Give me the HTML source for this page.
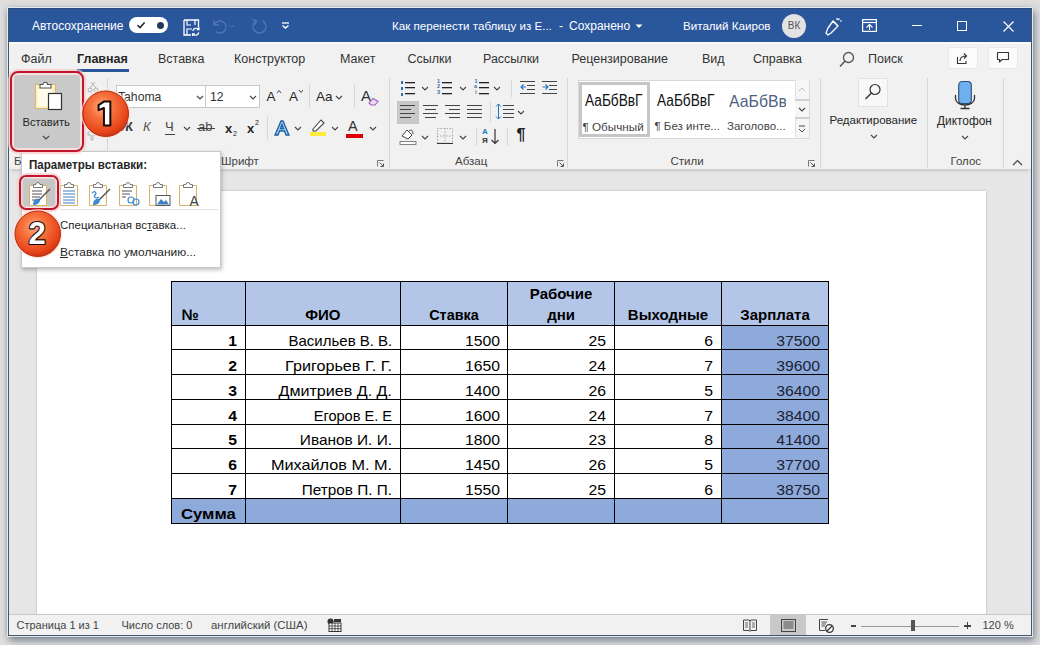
<!DOCTYPE html>
<html><head><meta charset="utf-8">
<style>
*{margin:0;padding:0;box-sizing:border-box}
html,body{width:1040px;height:645px;overflow:hidden;background:#dfdedd;font-family:"Liberation Sans",sans-serif}
.a{position:absolute}
#win{position:absolute;left:8px;top:8px;width:1024px;height:628px;background:#f1f1f1;box-shadow:0 0 0 1px rgba(228,236,245,.95), 2px 4px 7px 1px rgba(40,62,88,.5), -1px 0 5px rgba(60,85,110,.3);overflow:hidden}
#frame{position:absolute;left:8px;top:8px;width:1024px;height:628px;border:1px solid #4a5563;border-top:1px solid #2e4a78}
#title{position:absolute;left:0;top:0;width:1024px;height:34px;background:#2a569c;color:#fff;font-size:12px}
#tabs{position:absolute;left:0;top:34px;width:1024px;height:33px;background:#f1f1f1;font-size:12.5px;color:#333;border-top:2px solid #fafafa}
#ribbon{position:absolute;left:0;top:67px;width:1024px;height:94px;overflow:hidden;background:#f1f1f1;color:#262626;font-size:11.5px}
#doc{position:absolute;left:0;top:161px;width:1024px;height:445px;background:#e6e6e6;border-top:2px solid #d0d0d0;box-shadow:inset 0 2px 2px -1px #d8d8d8}
#page{position:absolute;left:29px;top:20px;width:949px;height:430px;background:#fff;box-shadow:0 0 2px rgba(0,0,0,.25)}
#status{position:absolute;left:0;top:606px;width:1024px;height:22px;overflow:hidden;background:#f1f1f1;border-top:1px solid #c9c9c9;font-size:11px;color:#444}
.t{position:absolute;white-space:nowrap}
#ov{position:absolute;left:0;top:0;width:1040px;height:645px}
#tbl{position:absolute;left:0;top:0;width:1040px;height:645px;font-family:"Liberation Sans",sans-serif}
</style></head><body>
<div id="win">
  <div id="title">
    <div class="t" style="left:24px;top:11px">Автосохранение</div>
    <div class="a" style="left:121px;top:9px;width:39px;height:16px;border-radius:8px;background:#fff"></div>
    <svg class="a" style="left:128px;top:12px" width="10" height="10" viewBox="0 0 10 10"><path d="M1.5 5.2 L4 7.6 L8.6 2.4" stroke="#222" stroke-width="1.5" fill="none"/></svg>
    <div class="a" style="left:148.5px;top:13.5px;width:7px;height:7px;border-radius:50%;background:#26385a"></div>
    <svg class="a" style="left:175px;top:10.5px" width="17" height="17" viewBox="0 0 17 17"><path d="M1 1 H15.5 V8.5 M1 1 V16 H8" stroke="#fff" stroke-width="1.3" fill="none"/><path d="M4 1 V6 H8 M12 1 V6" stroke="#fff" stroke-width="1.2" fill="none"/><path d="M4 16 V10 H9" stroke="#fff" stroke-width="1.2" fill="none"/><path d="M9.8 12 a3.6 3.4 0 0 1 6 -1.8 M16 8.5 v2.2 h-2.2 M15.8 13.5 a3.6 3.4 0 0 1 -6 1.8 M9.6 17 v-2.2 h2.2" stroke="#fff" stroke-width="1.2" fill="none"/></svg>
    <svg class="a" style="left:203px;top:9px" width="32" height="18" viewBox="0 0 32 18"><path d="M3 3 V8 H8 M3.5 7.5 A6 6 0 1 1 5 14.5" stroke="#5174b0" stroke-width="1.4" fill="none"/><path d="M18 8 l2.5 2.5 l2.5 -2.5" stroke="#5174b0" stroke-width="1" fill="none"/></svg>
    <svg class="a" style="left:241px;top:9px" width="20" height="20" viewBox="0 0 20 20"><path d="M7 4 A6.5 6.5 0 1 0 14 4" stroke="#5174b0" stroke-width="1.5" fill="none"/><path d="M3.5 2.5 L7.5 4 L6 8" stroke="#5174b0" stroke-width="1.4" fill="none"/></svg>
    <svg class="a" style="left:273px;top:13.5px" width="9" height="7" viewBox="0 0 9 7"><path d="M1 1 H8" stroke="#fff" stroke-width="1.3"/><path d="M1.5 3.5 L4.5 6 L7.5 3.5" stroke="#fff" stroke-width="1.4" fill="none"/></svg>
    <div class="t" style="left:384px;top:11px;font-size:11.6px">Как перенести таблицу из E...</div>
    <div class="t" style="left:551px;top:11px">-</div>
    <div class="t" style="left:561px;top:11px">Сохранено</div>
    <svg class="a" style="left:627px;top:16px" width="8" height="5" viewBox="0 0 8 5"><path d="M0.5 0.5 L4 4 L7.5 0.5 Z" fill="#fff"/></svg>
    <div class="t" style="left:675px;top:11px;font-size:11.6px">Виталий Каиров</div>
    <div class="a" style="left:774px;top:5.5px;width:24px;height:24px;border-radius:50%;background:#e3e3e3;color:#555;font-size:10px;line-height:24px;text-align:center">ВК</div>
    <svg class="a" style="left:815px;top:8px" width="20" height="20" viewBox="0 0 20 20"><path d="M3 17 L5 19 L8 17 L15 10 L10 5 L5 12 Z" stroke="#fff" stroke-width="1.3" fill="none" stroke-linejoin="round"/><path d="M10 5 L15 10" stroke="#fff" stroke-width="1.3"/><path d="M14 2 v2 M17 5 h2 M16.5 2.5 l-1.5 1.5" stroke="#fff" stroke-width="1.2"/></svg>
    <svg class="a" style="left:854px;top:11px" width="15" height="13" viewBox="0 0 15 13"><rect x="0.6" y="0.6" width="13.8" height="11.8" fill="none" stroke="#fff" stroke-width="1.2"/><path d="M0.6 3.5 H14.4" stroke="#fff" stroke-width="1.2"/><path d="M4.5 8.5 L7.5 5.5 L10.5 8.5 M7.5 6 V11" stroke="#fff" stroke-width="1.1" fill="none"/></svg>
    <div class="a" style="left:904px;top:17px;width:10px;height:1.2px;background:#fff"></div>
    <div class="a" style="left:949px;top:12.5px;width:10px;height:10px;border:1.2px solid #fff"></div>
    <svg class="a" style="left:995px;top:12.5px" width="11" height="11" viewBox="0 0 11 11"><path d="M0.5 0.5 L10.5 10.5 M10.5 0.5 L0.5 10.5" stroke="#fff" stroke-width="1.2"/></svg>
  </div>
  <div id="tabs">
    <div class="t" style="left:13px;top:7.5px">Файл</div>
    <div class="t" style="left:69px;top:7.5px;font-weight:bold;color:#262626">Главная</div>
    <div class="a" style="left:69px;top:25px;width:52px;height:3px;background:#2a569c"></div>
    <div class="t" style="left:150px;top:7.5px">Вставка</div>
    <div class="t" style="left:226px;top:7.5px">Конструктор</div>
    <div class="t" style="left:332px;top:7.5px">Макет</div>
    <div class="t" style="left:399.5px;top:7.5px">Ссылки</div>
    <div class="t" style="left:475px;top:7.5px">Рассылки</div>
    <div class="t" style="left:563.5px;top:7.5px">Рецензирование</div>
    <div class="t" style="left:694px;top:7.5px">Вид</div>
    <div class="t" style="left:745px;top:7.5px">Справка</div>
    <svg class="a" style="left:831px;top:6.5px" width="16" height="17" viewBox="0 0 16 17"><circle cx="9.5" cy="6.5" r="5" stroke="#555" stroke-width="1.3" fill="none"/><path d="M6 10 L1 15.5" stroke="#555" stroke-width="1.5"/></svg>
    <div class="t" style="left:860px;top:7.5px">Поиск</div>
    <div class="a" style="left:940px;top:3px;width:30px;height:22px;background:#fbfbfb;border:1px solid #e8e8e8;border-radius:2px"></div>
    <svg class="a" style="left:948px;top:7px" width="14" height="14" viewBox="0 0 14 14"><path d="M1.5 6 V12.5 H10 V10" stroke="#333" stroke-width="1.1" fill="none"/><path d="M4 10 C4 6.5 6.5 5 10 5 M8 2.5 L10.5 5 L8 7.5" stroke="#333" stroke-width="1.1" fill="none"/></svg>
    <div class="a" style="left:980px;top:3px;width:30px;height:22px;background:#fbfbfb;border:1px solid #e8e8e8;border-radius:2px"></div>
    <svg class="a" style="left:988px;top:7px" width="14" height="13" viewBox="0 0 14 13"><path d="M1.5 1.5 H12.5 V8.5 H6 L3.5 11 V8.5 H1.5 Z" stroke="#333" stroke-width="1.1" fill="none" stroke-linejoin="round"/></svg>
  </div>
  <div id="ribbon">
<div class="a" style="left:6px;top:0px;width:66px;height:73px;background:#c9c9c9"></div>
<svg class="a" style="left:24px;top:5px" width="32" height="32" viewBox="0 0 32 32">
<rect x="3.4" y="4.5" width="20" height="24" fill="#fcf1c6" stroke="#d8b868" stroke-width="1"/><rect x="6" y="9" width="14" height="17" fill="#fffbea"/>
<path d="M8 8 V4.5 H11 a2.3 2.3 0 0 1 4.6 0 H19 V8 Z" fill="#fff" stroke="#555" stroke-width="1.1"/>
<rect x="16.5" y="13.5" width="13" height="16" fill="#fff" stroke="#333" stroke-width="1.2"/></svg>
<div class="t" style="left:14.5px;top:41.7px;font-size:11.2px;line-height:11.2px;">Вставить</div>
<svg class="a" style="left:34px;top:59.5px" width="8" height="5" viewBox="0 0 8 5"><path d="M1 1 L4 4 L7 1" stroke="#444" stroke-width="1.1" fill="none"/></svg>
<svg class="a" style="left:77px;top:5px;opacity:.4" width="16" height="62" viewBox="0 0 16 62"><circle cx="5" cy="10" r="2" stroke="#555" fill="none"/><circle cx="11" cy="10" r="2" stroke="#555" fill="none"/><path d="M5 8 L10 2 M11 8 L6 2" stroke="#555"/><rect x="3.5" y="26.5" width="8" height="10" fill="none" stroke="#555"/><path d="M3 52 h8 v3 h-3 v5 h-2 v-5 h-3 Z" fill="none" stroke="#555"/></svg>
<div class="a" style="left:98.5px;top:3px;width:1px;height:72px;background:#d6d6d6"></div>
<div class="t" style="left:6px;top:80.6px;font-size:11.5px;line-height:11.5px;color:#444">Буфер обмена</div>
<div class="a" style="left:107.5px;top:10px;width:90px;height:22.5px;background:#fff;border:1px solid #c8c8c8"></div>
<div class="a" style="left:196.5px;top:10px;width:55.5px;height:22.5px;background:#fff;border:1px solid #c8c8c8"></div>
<div class="t" style="left:110px;top:15.7px;font-size:12.2px;line-height:12.2px;color:#333">Tahoma</div>
<svg class="a" style="left:188px;top:19.5px" width="8" height="5" viewBox="0 0 8 5"><path d="M1 1 L4 4 L7 1" stroke="#444" stroke-width="1.1" fill="none"/></svg>
<div class="t" style="left:202px;top:15.7px;font-size:12.2px;line-height:12.2px;color:#333">12</div>
<svg class="a" style="left:241px;top:19.5px" width="8" height="5" viewBox="0 0 8 5"><path d="M1 1 L4 4 L7 1" stroke="#444" stroke-width="1.1" fill="none"/></svg>
<div class="t" style="left:258.5px;top:15.4px;font-size:13.5px;line-height:13.5px;">A</div><svg class="a" style="left:268px;top:14px" width="6" height="5" viewBox="0 0 6 5"><path d="M1 4 L3 1.5 L5 4" stroke="#444" fill="none"/></svg>
<div class="t" style="left:281px;top:15.4px;font-size:13.5px;line-height:13.5px;">A</div><svg class="a" style="left:290px;top:14px" width="6" height="5" viewBox="0 0 6 5"><path d="M1 1 L3 3.5 L5 1" stroke="#444" fill="none"/></svg>
<div class="a" style="left:301px;top:9px;width:1px;height:24px;background:#d6d6d6"></div>
<div class="t" style="left:308px;top:15.4px;font-size:13.5px;line-height:13.5px;">Aa</div><svg class="a" style="left:327px;top:19.5px" width="8" height="5" viewBox="0 0 8 5"><path d="M1 1 L4 4 L7 1" stroke="#444" stroke-width="1.1" fill="none"/></svg>
<div class="a" style="left:346px;top:9px;width:1px;height:24px;background:#d6d6d6"></div>
<div class="t" style="left:353px;top:13.2px;font-size:15px;line-height:15px;color:#333">A</div><svg class="a" style="left:360px;top:22px" width="11" height="9" viewBox="0 0 11 9"><path d="M1 6 L5 1.5 L10 4.5 L7 8 H3 Z" fill="#eddcf5" stroke="#9b5fc4" stroke-width="1.1"/></svg>
<div class="t" style="left:113px;top:45.2px;font-size:13px;line-height:13px;color:#333"><b>Ж</b></div>
<div class="t" style="left:135px;top:45.2px;font-size:13px;line-height:13px;color:#555"><i>К</i></div>
<div class="t" style="left:157px;top:45.2px;font-size:13px;line-height:13px;color:#444">Ч</div><div class="a" style="left:157px;top:59px;width:10px;height:1px;background:#444"></div>
<svg class="a" style="left:175px;top:50.5px" width="8" height="5" viewBox="0 0 8 5"><path d="M1 1 L4 4 L7 1" stroke="#444" stroke-width="1.1" fill="none"/></svg>
<div class="t" style="left:190px;top:45.2px;font-size:13px;line-height:13px;color:#444">ab</div><div class="a" style="left:189px;top:53px;width:18px;height:1px;background:#444"></div>
<div class="t" style="left:217px;top:47.0px;font-size:13px;line-height:13px;"><b>x</b></div><div class="t" style="left:225px;top:55.2px;font-size:7px;line-height:7px;">2</div>
<div class="t" style="left:239px;top:47.0px;font-size:13px;line-height:13px;"><b>x</b></div><div class="t" style="left:247px;top:44.2px;font-size:7px;line-height:7px;">2</div>
<div class="a" style="left:258.5px;top:41px;width:1px;height:24px;background:#d6d6d6"></div>
<svg class="a" style="left:265px;top:44px" width="18" height="18" viewBox="0 0 18 18"><path d="M2 16 L8 2 H10 L16 16 H13 L11.5 12 H6.5 L5 16 Z M7.5 9.5 H10.5 L9 5.5 Z" fill="#9fd0f5" stroke="#1d5e9e" stroke-width="1.3" fill-rule="evenodd"/></svg><svg class="a" style="left:285.5px;top:50.5px" width="8" height="5" viewBox="0 0 8 5"><path d="M1 1 L4 4 L7 1" stroke="#444" stroke-width="1.1" fill="none"/></svg>
<svg class="a" style="left:300px;top:42px" width="20" height="20" viewBox="0 0 20 20"><path d="M5 12 L13 3 L16 6 L8 14 H5 Z" fill="#fff" stroke="#444" stroke-width="1.1"/><rect x="2" y="15" width="16" height="4" fill="#ffeb3b"/></svg><svg class="a" style="left:323px;top:50.5px" width="8" height="5" viewBox="0 0 8 5"><path d="M1 1 L4 4 L7 1" stroke="#444" stroke-width="1.1" fill="none"/></svg>
<div class="t" style="left:340px;top:44.3px;font-size:14.5px;line-height:14.5px;color:#333">A</div><div class="a" style="left:338px;top:59px;width:17px;height:4px;background:#d00"></div><svg class="a" style="left:360.5px;top:50.5px" width="8" height="5" viewBox="0 0 8 5"><path d="M1 1 L4 4 L7 1" stroke="#444" stroke-width="1.1" fill="none"/></svg>
<div class="t" style="left:213px;top:81.1px;font-size:11.5px;line-height:11.5px;color:#444">Шрифт</div>
<svg class="a" style="left:369.0px;top:84.5px" width="7" height="7" viewBox="0 0 7 7"><path d="M0.5 6.5 V0.5 H6.5" stroke="#777" stroke-width="1" fill="none"/><path d="M2.5 2.5 L6 6 M3.5 6.5 H6.5 V3.5" stroke="#555" stroke-width="1" fill="none"/></svg>
<div class="a" style="left:380.5px;top:3px;width:1px;height:90px;background:#d6d6d6"></div>
<div class="a" style="left:397px;top:7px;width:10px;height:1px;background:#222;box-shadow:0 1px 0 rgba(60,60,60,.35)"></div><div class="a" style="left:392.5px;top:6px;width:2.6px;height:2.6px;background:#2f6fae"></div><div class="a" style="left:397px;top:12px;width:10px;height:1px;background:#222;box-shadow:0 1px 0 rgba(60,60,60,.35)"></div><div class="a" style="left:392.5px;top:12px;width:2.6px;height:2.6px;background:#2f6fae"></div><div class="a" style="left:397px;top:18px;width:10px;height:1px;background:#222;box-shadow:0 1px 0 rgba(60,60,60,.35)"></div><div class="a" style="left:392.5px;top:18px;width:2.6px;height:2.6px;background:#2f6fae"></div><svg class="a" style="left:413px;top:11.0px" width="8" height="5" viewBox="0 0 8 5"><path d="M1 1 L4 4 L7 1" stroke="#444" stroke-width="1.1" fill="none"/></svg>
<div class="a" style="left:434px;top:7px;width:10px;height:1px;background:#222;box-shadow:0 1px 0 rgba(60,60,60,.35)"></div><div class="t" style="left:429px;top:3.5px;font-size:5.5px;line-height:5.5px;color:#2f6fae;font-weight:bold">1</div><div class="a" style="left:434px;top:12px;width:10px;height:1px;background:#222;box-shadow:0 1px 0 rgba(60,60,60,.35)"></div><div class="t" style="left:429px;top:9.2px;font-size:5.5px;line-height:5.5px;color:#2f6fae;font-weight:bold">2</div><div class="a" style="left:434px;top:18px;width:10px;height:1px;background:#222;box-shadow:0 1px 0 rgba(60,60,60,.35)"></div><div class="t" style="left:429px;top:14.9px;font-size:5.5px;line-height:5.5px;color:#2f6fae;font-weight:bold">3</div><svg class="a" style="left:451px;top:11.0px" width="8" height="5" viewBox="0 0 8 5"><path d="M1 1 L4 4 L7 1" stroke="#444" stroke-width="1.1" fill="none"/></svg>
<div class="a" style="left:471px;top:7px;width:10px;height:1px;background:#222;box-shadow:0 1px 0 rgba(60,60,60,.35)"></div><div class="t" style="left:466.5px;top:3.5px;font-size:5.5px;line-height:5.5px;color:#2f6fae;font-weight:bold">1</div><div class="a" style="left:471px;top:12px;width:10px;height:1px;background:#222;box-shadow:0 1px 0 rgba(60,60,60,.35)"></div><div class="t" style="left:466px;top:9.2px;font-size:5.5px;line-height:5.5px;color:#2f6fae;font-weight:bold">a</div><div class="a" style="left:471px;top:18px;width:10px;height:1px;background:#222;box-shadow:0 1px 0 rgba(60,60,60,.35)"></div><div class="t" style="left:467px;top:14.9px;font-size:5.5px;line-height:5.5px;color:#2f6fae;font-weight:bold">i</div><svg class="a" style="left:485px;top:11.0px" width="8" height="5" viewBox="0 0 8 5"><path d="M1 1 L4 4 L7 1" stroke="#444" stroke-width="1.1" fill="none"/></svg>
<div class="a" style="left:503px;top:5px;width:1px;height:17px;background:#d6d6d6"></div>
<div class="a" style="left:511.5px;top:6px;width:15px;height:1.3px;background:#444"></div><div class="a" style="left:518.5px;top:10px;width:8px;height:1.3px;background:#444"></div><div class="a" style="left:518.5px;top:14px;width:8px;height:1.3px;background:#444"></div><div class="a" style="left:511.5px;top:18px;width:15px;height:1.3px;background:#444"></div><svg class="a" style="left:511.5px;top:8px" width="7" height="8" viewBox="0 0 7 8"><path d="M6 4 H1 M3.5 1.5 L1 4 L3.5 6.5" stroke="#1e76c8" stroke-width="1.1" fill="none"/></svg>
<div class="a" style="left:533.5px;top:6px;width:15px;height:1.3px;background:#444"></div><div class="a" style="left:540.5px;top:10px;width:8px;height:1.3px;background:#444"></div><div class="a" style="left:540.5px;top:14px;width:8px;height:1.3px;background:#444"></div><div class="a" style="left:533.5px;top:18px;width:15px;height:1.3px;background:#444"></div><svg class="a" style="left:533.5px;top:8px" width="7" height="8" viewBox="0 0 7 8"><path d="M0.5 4 H6 M3.5 1.5 L6 4 L3.5 6.5" stroke="#1e76c8" stroke-width="1.1" fill="none"/></svg>
<div class="a" style="left:389px;top:26px;width:22px;height:23px;background:#c8c8c8"></div>
<div class="a" style="left:392px;top:30px;width:15px;height:1.3px;background:#444"></div><div class="a" style="left:392px;top:34px;width:11px;height:1.3px;background:#444"></div><div class="a" style="left:392px;top:38px;width:15px;height:1.3px;background:#444"></div><div class="a" style="left:392px;top:42px;width:11px;height:1.3px;background:#444"></div>
<div class="a" style="left:414.5px;top:30px;width:15px;height:1.3px;background:#444"></div><div class="a" style="left:416.5px;top:34px;width:11px;height:1.3px;background:#444"></div><div class="a" style="left:414.5px;top:38px;width:15px;height:1.3px;background:#444"></div><div class="a" style="left:416.5px;top:42px;width:11px;height:1.3px;background:#444"></div>
<div class="a" style="left:436.5px;top:30px;width:15px;height:1.3px;background:#444"></div><div class="a" style="left:440.5px;top:34px;width:11px;height:1.3px;background:#444"></div><div class="a" style="left:436.5px;top:38px;width:15px;height:1.3px;background:#444"></div><div class="a" style="left:440.5px;top:42px;width:11px;height:1.3px;background:#444"></div>
<div class="a" style="left:458.5px;top:30px;width:15px;height:1.3px;background:#444"></div><div class="a" style="left:458.5px;top:34px;width:15px;height:1.3px;background:#444"></div><div class="a" style="left:458.5px;top:38px;width:15px;height:1.3px;background:#444"></div><div class="a" style="left:458.5px;top:42px;width:15px;height:1.3px;background:#444"></div>
<div class="a" style="left:481.5px;top:27px;width:1px;height:20px;background:#d6d6d6"></div>
<div class="a" style="left:495px;top:30px;width:11px;height:1.3px;background:#444"></div><div class="a" style="left:495px;top:34px;width:11px;height:1.3px;background:#444"></div><div class="a" style="left:495px;top:38px;width:11px;height:1.3px;background:#444"></div><div class="a" style="left:495px;top:42px;width:11px;height:1.3px;background:#444"></div><svg class="a" style="left:487px;top:28px" width="7" height="17" viewBox="0 0 7 17"><path d="M3.5 1 V16 M1 3.5 L3.5 1 L6 3.5 M1 13.5 L3.5 16 L6 13.5" stroke="#1e76c8" stroke-width="1" fill="none"/></svg><svg class="a" style="left:508.5px;top:34.5px" width="8" height="5" viewBox="0 0 8 5"><path d="M1 1 L4 4 L7 1" stroke="#444" stroke-width="1.1" fill="none"/></svg>
<svg class="a" style="left:391px;top:52px" width="18" height="18" viewBox="0 0 18 18"><path d="M3 9 L8 3 L13 8 L9 12 Z" fill="#fff" stroke="#444"/><path d="M10 4 C12 2 14 3 14 7" stroke="#444" fill="none"/><rect x="1" y="14.5" width="16" height="3" fill="#fff" stroke="#666" stroke-width=".8"/></svg><svg class="a" style="left:413px;top:59.5px" width="8" height="5" viewBox="0 0 8 5"><path d="M1 1 L4 4 L7 1" stroke="#444" stroke-width="1.1" fill="none"/></svg>
<svg class="a" style="left:429px;top:53px" width="16" height="16" viewBox="0 0 16 16"><rect x="0.5" y="0.5" width="15" height="15" fill="none" stroke="#aaa" stroke-dasharray="1.5 1.5"/><path d="M8 0 V16 M0 8 H16" stroke="#aaa" stroke-dasharray="1.5 1.5"/><path d="M0 15.5 H16" stroke="#333" stroke-width="1.2"/></svg><svg class="a" style="left:451px;top:59.5px" width="8" height="5" viewBox="0 0 8 5"><path d="M1 1 L4 4 L7 1" stroke="#444" stroke-width="1.1" fill="none"/></svg>
<div class="a" style="left:467.5px;top:53px;width:1px;height:18px;background:#d6d6d6"></div>
<div class="t" style="left:474px;top:53.1px;font-size:8px;line-height:8px;color:#1e76c8;font-weight:bold">A</div><div class="t" style="left:474px;top:62.1px;font-size:8px;line-height:8px;color:#333;font-weight:bold">Я</div><svg class="a" style="left:482px;top:53px" width="10" height="17" viewBox="0 0 10 17"><path d="M5 1 V15.5 M1.5 12 L5 15.5 L8.5 12" stroke="#333" stroke-width="1.2" fill="none"/></svg>
<div class="a" style="left:498.5px;top:53px;width:1px;height:18px;background:#d6d6d6"></div>
<div class="t" style="left:508.5px;top:52.2px;font-size:16px;line-height:16px;color:#222;font-weight:bold">¶</div>
<div class="t" style="left:447px;top:81.1px;font-size:11.5px;line-height:11.5px;color:#444">Абзац</div>
<svg class="a" style="left:548.5px;top:84.5px" width="7" height="7" viewBox="0 0 7 7"><path d="M0.5 6.5 V0.5 H6.5" stroke="#777" stroke-width="1" fill="none"/><path d="M2.5 2.5 L6 6 M3.5 6.5 H6.5 V3.5" stroke="#555" stroke-width="1" fill="none"/></svg>
<div class="a" style="left:559px;top:3px;width:1px;height:90px;background:#d6d6d6"></div>
<div class="a" style="left:569.5px;top:4.5px;width:232px;height:59px;background:#fff;border:1px solid #d9d9d9"></div>
<div class="a" style="left:570.5px;top:6.5px;width:71px;height:55px;border:3px solid #c6c6c6"></div>
<div class="t" style="left:577px;top:18.4px;font-size:16px;line-height:16px;color:#111;transform:scaleX(.855);transform-origin:0 0">АаБбВвГ</div>
<div class="t" style="left:574.5px;top:45.6px;font-size:11.7px;line-height:11.7px;color:#444">¶ Обычный</div>
<div class="t" style="left:649.3px;top:18.4px;font-size:16px;line-height:16px;color:#111;transform:scaleX(.855);transform-origin:0 0">АаБбВвГ</div>
<div class="t" style="left:646.5px;top:45.6px;font-size:11.5px;line-height:11.5px;color:#444">¶ Без инте...</div>
<div class="a" style="left:720.5px;top:10px;width:57.5px;height:30px;overflow:hidden"><div class="t" style="left:0;top:7.8px;font-size:17px;line-height:17px;color:#4c6283;transform:scaleX(.93);transform-origin:0 0">АаБбВв</div></div>
<div class="t" style="left:719px;top:45.6px;font-size:11.5px;line-height:11.5px;color:#444">Заголово...</div>
<div class="a" style="left:787px;top:5px;width:14px;height:58px;background:#f6f6f6;border-left:1px solid #e0e0e0"></div>
<div class="a" style="left:787px;top:24px;width:14px;height:20px;border-top:2px solid #cfcfcf;border-bottom:2px solid #cfcfcf;background:#f6f6f6"></div>
<svg class="a" style="left:790px;top:12px" width="8" height="5" viewBox="0 0 8 5"><path d="M1 4 L4 1 L7 4" stroke="#bbb" fill="none"/></svg>
<svg class="a" style="left:790px;top:31.5px" width="8" height="5" viewBox="0 0 8 5"><path d="M1 1 L4 4 L7 1" stroke="#444" stroke-width="1.1" fill="none"/></svg>
<svg class="a" style="left:790px;top:50px" width="8" height="8" viewBox="0 0 8 8"><path d="M1 1 H7 M1 4 L4 7 L7 4" stroke="#444" fill="none"/></svg>
<div class="t" style="left:662.5px;top:81.1px;font-size:11.5px;line-height:11.5px;color:#444">Стили</div>
<svg class="a" style="left:800.0px;top:84.5px" width="7" height="7" viewBox="0 0 7 7"><path d="M0.5 6.5 V0.5 H6.5" stroke="#777" stroke-width="1" fill="none"/><path d="M2.5 2.5 L6 6 M3.5 6.5 H6.5 V3.5" stroke="#555" stroke-width="1" fill="none"/></svg>
<div class="a" style="left:812px;top:3px;width:1px;height:90px;background:#d6d6d6"></div>
<div class="a" style="left:850px;top:2.5px;width:30px;height:29px;background:#f8f8f8;border:1px solid #e2e2e2"></div>
<svg class="a" style="left:856px;top:8px" width="18" height="18" viewBox="0 0 18 18"><circle cx="11" cy="6.5" r="5" stroke="#333" stroke-width="1.2" fill="none"/><path d="M7.5 10 L1.5 16" stroke="#333" stroke-width="1.5"/></svg>
<div class="t" style="left:821.5px;top:39.6px;font-size:11.5px;line-height:11.5px;">Редактирование</div>
<svg class="a" style="left:862px;top:58.5px" width="8" height="5" viewBox="0 0 8 5"><path d="M1 1 L4 4 L7 1" stroke="#444" stroke-width="1.1" fill="none"/></svg>
<div class="a" style="left:919px;top:3px;width:1px;height:90px;background:#d6d6d6"></div>
<svg class="a" style="left:943px;top:4px" width="28" height="32" viewBox="0 0 28 32"><rect x="7.7" y="2.5" width="12.6" height="22" rx="3.5" fill="#6eb0ee" stroke="#2d4f74" stroke-width="1.1"/><path d="M4.5 16 V19.5 a9.5 6.5 0 0 0 19 0 V16" stroke="#333" stroke-width="1.3" fill="none"/><path d="M14 26 V29.5 M9.5 29.5 H18.5" stroke="#333" stroke-width="1.3"/></svg>
<div class="t" style="left:929px;top:41.1px;font-size:11.9px;line-height:11.9px;">Диктофон</div>
<svg class="a" style="left:952.5px;top:59.5px" width="8" height="5" viewBox="0 0 8 5"><path d="M1 1 L4 4 L7 1" stroke="#444" stroke-width="1.1" fill="none"/></svg>
<div class="t" style="left:942.5px;top:81.1px;font-size:11.5px;line-height:11.5px;color:#444">Голос</div>
<div class="a" style="left:995px;top:3px;width:1px;height:90px;background:#d6d6d6"></div>
<svg class="a" style="left:1004px;top:84px" width="11" height="7" viewBox="0 0 11 7"><path d="M1 6 L5.5 1.5 L10 6" stroke="#444" stroke-width="1.2" fill="none"/></svg>
</div>
  <div id="doc"><div id="page"></div></div>
  <div id="status"><div class="t" style="left:8.5px;top:5px;font-size:11px;line-height:11px">Страница 1 из 1</div>
<div class="t" style="left:113.5px;top:5px;font-size:11px;line-height:11px">Число слов: 0</div>
<div class="t" style="left:203px;top:5px;font-size:11px;line-height:11px;transform:scaleX(1.037);transform-origin:0 0">английский (США)</div>
<svg class="a" style="left:319px;top:3px" width="15" height="14" viewBox="0 0 15 14"><circle cx="3.5" cy="3.5" r="3" fill="#333"/><rect x="2" y="5" width="12" height="8.5" fill="#fff" stroke="#333"/><path d="M2 8 H14 M2 10.7 H14 M5 5 V13.5 M8 5 V13.5 M11 5 V13.5" stroke="#333" stroke-width=".8"/><rect x="7" y="1" width="7" height="3" fill="#333"/></svg>
<svg class="a" style="left:735px;top:4px" width="14" height="13" viewBox="0 0 14 13"><path d="M0.5 1 H6 L7 2 L8 1 H13.5 V11.5 H8 L7 12.5 L6 11.5 H0.5 Z M7 2 V12" stroke="#444" fill="none"/><path d="M2 4 H5 M2 6 H5 M2 8 H5 M9 4 H12 M9 6 H12 M9 8 H12" stroke="#444" stroke-width=".8"/></svg>
<div class="a" style="left:762px;top:0px;width:36px;height:21px;background:#c8c8c8"></div>
<svg class="a" style="left:773px;top:4px" width="15" height="13" viewBox="0 0 15 13"><rect x="0.5" y="0.5" width="14" height="12" fill="none" stroke="#444"/><path d="M2.5 3 H12.5 M2.5 5 H12.5 M2.5 7 H12.5 M2.5 9 H12.5" stroke="#444" stroke-width=".9"/></svg>
<svg class="a" style="left:811px;top:4px" width="15" height="14" viewBox="0 0 15 14"><path d="M9 0.5 H0.5 V11.5 H6" stroke="#444" fill="none"/><path d="M2.5 3 H8 M2.5 5 H7 M2.5 7 H6" stroke="#444" stroke-width=".9"/><circle cx="10.5" cy="9.5" r="3.8" fill="#fff" stroke="#333" stroke-width="1.3"/><path d="M8 12 L13 7" stroke="#333" stroke-width="1.3"/></svg>
<div class="a" style="left:843px;top:10px;width:5px;height:1.5px;background:#444"></div>
<div class="a" style="left:853px;top:10.5px;width:98px;height:1px;background:#999"></div>
<div class="a" style="left:902.5px;top:5px;width:4.5px;height:11px;background:#555"></div>
<div class="a" style="left:956px;top:10px;width:7px;height:1.5px;background:#444"></div><div class="a" style="left:958.7px;top:7.2px;width:1.5px;height:7px;background:#444"></div>
<div class="t" style="left:974.5px;top:5px;font-size:11px;line-height:11px">120 %</div></div>
</div>
<div id="tbl"><div class="a" style="left:171.5px;top:281.5px;width:657.0px;height:43.5px;background:#b4c6e7"></div>
<div class="a" style="left:721.6px;top:325px;width:106.9px;height:173.5px;background:#8eaadb"></div>
<div class="a" style="left:171.5px;top:498.5px;width:657.0px;height:24.5px;background:#8eaadb"></div>
<div class="a" style="left:171.0px;top:281.0px;width:658.0px;height:1px;background:#000"></div>
<div class="a" style="left:171.0px;top:324.5px;width:658.0px;height:1px;background:#000"></div>
<div class="a" style="left:171.0px;top:349.0px;width:658.0px;height:1px;background:#000"></div>
<div class="a" style="left:171.0px;top:373.5px;width:658.0px;height:1px;background:#000"></div>
<div class="a" style="left:171.0px;top:398.5px;width:658.0px;height:1px;background:#000"></div>
<div class="a" style="left:171.0px;top:423.5px;width:658.0px;height:1px;background:#000"></div>
<div class="a" style="left:171.0px;top:448.0px;width:658.0px;height:1px;background:#000"></div>
<div class="a" style="left:171.0px;top:472.5px;width:658.0px;height:1px;background:#000"></div>
<div class="a" style="left:171.0px;top:498.0px;width:658.0px;height:1px;background:#000"></div>
<div class="a" style="left:171.0px;top:522.5px;width:658.0px;height:1px;background:#000"></div>
<div class="a" style="left:171.0px;top:281.0px;width:1px;height:242.5px;background:#000"></div>
<div class="a" style="left:244.8px;top:281.0px;width:1px;height:242.5px;background:#000"></div>
<div class="a" style="left:400.0px;top:281.0px;width:1px;height:242.5px;background:#000"></div>
<div class="a" style="left:507.2px;top:281.0px;width:1px;height:242.5px;background:#000"></div>
<div class="a" style="left:614.0px;top:281.0px;width:1px;height:242.5px;background:#000"></div>
<div class="a" style="left:721.1px;top:281.0px;width:1px;height:242.5px;background:#000"></div>
<div class="a" style="left:828.0px;top:281.0px;width:1px;height:242.5px;background:#000"></div>
<div class="t" style="left:181.5px;top:306.7px;font-size:15.5px;line-height:15.5px;color:#000;font-weight:bold;">№</div>
<div class="t" style="left:222.9px;top:307.1px;width:200px;text-align:center;font-size:15px;line-height:15px;color:#000;font-weight:bold;">ФИО</div>
<div class="t" style="left:354.1px;top:307.1px;width:200px;text-align:center;font-size:15px;line-height:15px;color:#000;font-weight:bold;transform:scaleX(0.963);">Ставка</div>
<div class="t" style="left:461.1px;top:286.1px;width:200px;text-align:center;font-size:15px;line-height:15px;color:#000;font-weight:bold;">Рабочие</div>
<div class="t" style="left:461.1px;top:307.1px;width:200px;text-align:center;font-size:15px;line-height:15px;color:#000;font-weight:bold;">дни</div>
<div class="t" style="left:568.0px;top:307.1px;width:200px;text-align:center;font-size:15px;line-height:15px;color:#000;font-weight:bold;">Выходные</div>
<div class="t" style="left:675.0px;top:307.1px;width:200px;text-align:center;font-size:15px;line-height:15px;color:#000;font-weight:bold;">Зарплата</div>
<div class="t" style="left:37.1px;top:333.0px;width:200px;text-align:right;font-size:15px;line-height:15px;color:#000;font-weight:bold;transform:scaleX(1.050);transform-origin:100% 50%;">1</div>
<div class="t" style="left:192.3px;top:333.0px;width:200px;text-align:right;font-size:15px;line-height:15px;color:#000;">Васильев В. В.</div>
<div class="t" style="left:299.5px;top:333.0px;width:200px;text-align:right;font-size:15px;line-height:15px;color:#000;transform:scaleX(1.050);transform-origin:100% 50%;">1500</div>
<div class="t" style="left:406.3px;top:333.0px;width:200px;text-align:right;font-size:15px;line-height:15px;color:#000;transform:scaleX(1.050);transform-origin:100% 50%;">25</div>
<div class="t" style="left:513.4px;top:333.0px;width:200px;text-align:right;font-size:15px;line-height:15px;color:#000;transform:scaleX(1.050);transform-origin:100% 50%;">6</div>
<div class="t" style="left:620.3px;top:333.0px;width:200px;text-align:right;font-size:15px;line-height:15px;color:#1b2335;transform:scaleX(1.050);transform-origin:100% 50%;">37500</div>
<div class="t" style="left:37.1px;top:357.5px;width:200px;text-align:right;font-size:15px;line-height:15px;color:#000;font-weight:bold;transform:scaleX(1.050);transform-origin:100% 50%;">2</div>
<div class="t" style="left:192.3px;top:357.5px;width:200px;text-align:right;font-size:15px;line-height:15px;color:#000;transform:scaleX(1.078);transform-origin:100% 50%;">Григорьев Г. Г.</div>
<div class="t" style="left:299.5px;top:357.5px;width:200px;text-align:right;font-size:15px;line-height:15px;color:#000;transform:scaleX(1.050);transform-origin:100% 50%;">1650</div>
<div class="t" style="left:406.3px;top:357.5px;width:200px;text-align:right;font-size:15px;line-height:15px;color:#000;transform:scaleX(1.050);transform-origin:100% 50%;">24</div>
<div class="t" style="left:513.4px;top:357.5px;width:200px;text-align:right;font-size:15px;line-height:15px;color:#000;transform:scaleX(1.050);transform-origin:100% 50%;">7</div>
<div class="t" style="left:620.3px;top:357.5px;width:200px;text-align:right;font-size:15px;line-height:15px;color:#1b2335;transform:scaleX(1.050);transform-origin:100% 50%;">39600</div>
<div class="t" style="left:37.1px;top:382.5px;width:200px;text-align:right;font-size:15px;line-height:15px;color:#000;font-weight:bold;transform:scaleX(1.050);transform-origin:100% 50%;">3</div>
<div class="t" style="left:192.3px;top:382.5px;width:200px;text-align:right;font-size:15px;line-height:15px;color:#000;transform:scaleX(1.073);transform-origin:100% 50%;">Дмитриев Д. Д.</div>
<div class="t" style="left:299.5px;top:382.5px;width:200px;text-align:right;font-size:15px;line-height:15px;color:#000;transform:scaleX(1.050);transform-origin:100% 50%;">1400</div>
<div class="t" style="left:406.3px;top:382.5px;width:200px;text-align:right;font-size:15px;line-height:15px;color:#000;transform:scaleX(1.050);transform-origin:100% 50%;">26</div>
<div class="t" style="left:513.4px;top:382.5px;width:200px;text-align:right;font-size:15px;line-height:15px;color:#000;transform:scaleX(1.050);transform-origin:100% 50%;">5</div>
<div class="t" style="left:620.3px;top:382.5px;width:200px;text-align:right;font-size:15px;line-height:15px;color:#1b2335;transform:scaleX(1.050);transform-origin:100% 50%;">36400</div>
<div class="t" style="left:37.1px;top:407.5px;width:200px;text-align:right;font-size:15px;line-height:15px;color:#000;font-weight:bold;transform:scaleX(1.050);transform-origin:100% 50%;">4</div>
<div class="t" style="left:192.3px;top:407.5px;width:200px;text-align:right;font-size:15px;line-height:15px;color:#000;transform:scaleX(0.971);transform-origin:100% 50%;">Егоров Е. Е</div>
<div class="t" style="left:299.5px;top:407.5px;width:200px;text-align:right;font-size:15px;line-height:15px;color:#000;transform:scaleX(1.050);transform-origin:100% 50%;">1600</div>
<div class="t" style="left:406.3px;top:407.5px;width:200px;text-align:right;font-size:15px;line-height:15px;color:#000;transform:scaleX(1.050);transform-origin:100% 50%;">24</div>
<div class="t" style="left:513.4px;top:407.5px;width:200px;text-align:right;font-size:15px;line-height:15px;color:#000;transform:scaleX(1.050);transform-origin:100% 50%;">7</div>
<div class="t" style="left:620.3px;top:407.5px;width:200px;text-align:right;font-size:15px;line-height:15px;color:#1b2335;transform:scaleX(1.050);transform-origin:100% 50%;">38400</div>
<div class="t" style="left:37.1px;top:432.0px;width:200px;text-align:right;font-size:15px;line-height:15px;color:#000;font-weight:bold;transform:scaleX(1.050);transform-origin:100% 50%;">5</div>
<div class="t" style="left:192.3px;top:432.0px;width:200px;text-align:right;font-size:15px;line-height:15px;color:#000;transform:scaleX(1.027);transform-origin:100% 50%;">Иванов И. И.</div>
<div class="t" style="left:299.5px;top:432.0px;width:200px;text-align:right;font-size:15px;line-height:15px;color:#000;transform:scaleX(1.050);transform-origin:100% 50%;">1800</div>
<div class="t" style="left:406.3px;top:432.0px;width:200px;text-align:right;font-size:15px;line-height:15px;color:#000;transform:scaleX(1.050);transform-origin:100% 50%;">23</div>
<div class="t" style="left:513.4px;top:432.0px;width:200px;text-align:right;font-size:15px;line-height:15px;color:#000;transform:scaleX(1.050);transform-origin:100% 50%;">8</div>
<div class="t" style="left:620.3px;top:432.0px;width:200px;text-align:right;font-size:15px;line-height:15px;color:#1b2335;transform:scaleX(1.050);transform-origin:100% 50%;">41400</div>
<div class="t" style="left:37.1px;top:456.5px;width:200px;text-align:right;font-size:15px;line-height:15px;color:#000;font-weight:bold;transform:scaleX(1.050);transform-origin:100% 50%;">6</div>
<div class="t" style="left:192.3px;top:456.5px;width:200px;text-align:right;font-size:15px;line-height:15px;color:#000;transform:scaleX(1.083);transform-origin:100% 50%;">Михайлов М. М.</div>
<div class="t" style="left:299.5px;top:456.5px;width:200px;text-align:right;font-size:15px;line-height:15px;color:#000;transform:scaleX(1.050);transform-origin:100% 50%;">1450</div>
<div class="t" style="left:406.3px;top:456.5px;width:200px;text-align:right;font-size:15px;line-height:15px;color:#000;transform:scaleX(1.050);transform-origin:100% 50%;">26</div>
<div class="t" style="left:513.4px;top:456.5px;width:200px;text-align:right;font-size:15px;line-height:15px;color:#000;transform:scaleX(1.050);transform-origin:100% 50%;">5</div>
<div class="t" style="left:620.3px;top:456.5px;width:200px;text-align:right;font-size:15px;line-height:15px;color:#1b2335;transform:scaleX(1.050);transform-origin:100% 50%;">37700</div>
<div class="t" style="left:37.1px;top:482.0px;width:200px;text-align:right;font-size:15px;line-height:15px;color:#000;font-weight:bold;transform:scaleX(1.050);transform-origin:100% 50%;">7</div>
<div class="t" style="left:192.3px;top:482.0px;width:200px;text-align:right;font-size:15px;line-height:15px;color:#000;transform:scaleX(1.021);transform-origin:100% 50%;">Петров П. П.</div>
<div class="t" style="left:299.5px;top:482.0px;width:200px;text-align:right;font-size:15px;line-height:15px;color:#000;transform:scaleX(1.050);transform-origin:100% 50%;">1550</div>
<div class="t" style="left:406.3px;top:482.0px;width:200px;text-align:right;font-size:15px;line-height:15px;color:#000;transform:scaleX(1.050);transform-origin:100% 50%;">25</div>
<div class="t" style="left:513.4px;top:482.0px;width:200px;text-align:right;font-size:15px;line-height:15px;color:#000;transform:scaleX(1.050);transform-origin:100% 50%;">6</div>
<div class="t" style="left:620.3px;top:482.0px;width:200px;text-align:right;font-size:15px;line-height:15px;color:#1b2335;transform:scaleX(1.050);transform-origin:100% 50%;">38750</div>
<div class="t" style="left:181px;top:505.9px;font-size:15px;line-height:15px;color:#000;font-weight:bold;transform:scaleX(1.111);transform-origin:0 50%;">Сумма</div></div>
<div class="a" style="left:9px;top:170px;width:3px;height:444px;background:linear-gradient(90deg,#dfe7ee,#e8e8e8)"></div>
<div class="a" style="left:1028px;top:170px;width:3px;height:444px;background:linear-gradient(90deg,#e8e8e8,#dfe7ee)"></div>
<div id="frame"></div>
<div id="ov"><div class="a" style="left:20.5px;top:150.5px;width:200px;height:117.5px;background:#fff;border:1px solid #c8c8c8;box-shadow:1px 2px 4px rgba(0,0,0,.25)"></div>
<div class="t" style="left:28.6px;top:159.1px;font-size:12px;line-height:12px;font-weight:bold;color:#262626;transform:scaleX(.963);transform-origin:0 0">Параметры вставки:</div>
<div class="a" style="left:22px;top:178px;width:33.5px;height:28.5px;background:#c6c6c6"></div>
<svg class="a" style="left:27px;top:181px" width="24" height="26" viewBox="0 0 24 26">
<path d="M2.5 4.5 H19.5 V24.5 H2.5 Z" fill="#fff" stroke="#d4b36a" stroke-width="1"/>
<path d="M6.5 6.5 V3.5 H9 a2 2 0 0 1 4 0 H15.5 V6.5 Z" fill="#fff" stroke="#777" stroke-width="1"/><path d="M5 10 H15 M5 13 H15 M5 16 H13 M5 19 H11" stroke="#555" stroke-width="1"/><path d="M23 8 L12 19" stroke="#555" stroke-width="1.5"/><path d="M12 18 C9 17 6 19 6 24 C10 24 13 22 13 19 Z" fill="#3d8ad0"/></svg>
<svg class="a" style="left:57.5px;top:181px" width="24" height="26" viewBox="0 0 24 26">
<path d="M2.5 4.5 H19.5 V24.5 H2.5 Z" fill="#fff" stroke="#d4b36a" stroke-width="1"/>
<path d="M6.5 6.5 V3.5 H9 a2 2 0 0 1 4 0 H15.5 V6.5 Z" fill="#fff" stroke="#777" stroke-width="1"/><path d="M5 10 H17 M5 13 H17 M5 16 H17 M5 19 H17 M5 22 H17" stroke="#3d7fc0" stroke-width="1.1"/></svg>
<svg class="a" style="left:87px;top:181px" width="24" height="26" viewBox="0 0 24 26">
<path d="M2.5 4.5 H19.5 V24.5 H2.5 Z" fill="#fff" stroke="#d4b36a" stroke-width="1"/>
<path d="M6.5 6.5 V3.5 H9 a2 2 0 0 1 4 0 H15.5 V6.5 Z" fill="#fff" stroke="#777" stroke-width="1"/><path d="M5 12 C8 9 10 12 8 14 C6 16 9 18 12 16" stroke="#3d8ad0" stroke-width="1.3" fill="none"/><path d="M23 8 L12 19" stroke="#555" stroke-width="1.5"/><path d="M12 18 C9 17 6 19 6 24 C10 24 13 22 13 19 Z" fill="#3d8ad0"/></svg>
<svg class="a" style="left:117px;top:181px" width="24" height="26" viewBox="0 0 24 26">
<path d="M2.5 4.5 H19.5 V24.5 H2.5 Z" fill="#fff" stroke="#d4b36a" stroke-width="1"/>
<path d="M6.5 6.5 V3.5 H9 a2 2 0 0 1 4 0 H15.5 V6.5 Z" fill="#fff" stroke="#777" stroke-width="1"/><path d="M5 10 H15 M5 13 H13 M5 16 H9" stroke="#555" stroke-width="1"/><circle cx="14" cy="19" r="3" fill="none" stroke="#3d8ad0" stroke-width="1.2"/><circle cx="19" cy="21" r="3" fill="none" stroke="#3d8ad0" stroke-width="1.2"/></svg>
<svg class="a" style="left:147px;top:181px" width="24" height="26" viewBox="0 0 24 26">
<path d="M2.5 4.5 H19.5 V24.5 H2.5 Z" fill="#fff" stroke="#d4b36a" stroke-width="1"/>
<path d="M6.5 6.5 V3.5 H9 a2 2 0 0 1 4 0 H15.5 V6.5 Z" fill="#fff" stroke="#777" stroke-width="1"/><rect x="9" y="14.5" width="14" height="10" fill="#fff" stroke="#555"/><path d="M10 23.5 L14 18 L17 21 L19 19 L22 23.5 Z" fill="#3d7fc0"/></svg>
<svg class="a" style="left:177px;top:181px" width="24" height="26" viewBox="0 0 24 26">
<path d="M2.5 4.5 H19.5 V24.5 H2.5 Z" fill="#fff" stroke="#d4b36a" stroke-width="1"/>
<path d="M6.5 6.5 V3.5 H9 a2 2 0 0 1 4 0 H15.5 V6.5 Z" fill="#fff" stroke="#777" stroke-width="1"/><text x="12.5" y="25" font-family="Liberation Sans" font-size="14" fill="#444">A</text></svg>
<div class="a" style="left:60px;top:209px;width:158px;height:1px;background:#e1e1e1"></div>
<div class="t" style="left:60px;top:220.1px;font-size:11.5px;line-height:11.5px;color:#262626">Специальная вс<u>т</u>авка...</div>
<div class="t" style="left:59.6px;top:247.1px;font-size:11.5px;line-height:11.5px;color:#262626;transform:scaleX(1.037);transform-origin:0 0"><u>В</u>ставка по умолчанию...</div>
<div class="a" style="left:10.2px;top:71.2px;width:73.6px;height:80.8px;border:2.7px solid #bd1729;border-radius:8px;box-shadow:0 0 1px 2px rgba(248,200,200,.75), inset 0 0 1px 2px rgba(250,215,215,.7)"></div>
<div class="a" style="left:19px;top:175px;width:39.5px;height:34.5px;border:2.7px solid #bd1729;border-radius:7px;box-shadow:0 0 1px 2px rgba(248,200,200,.75), inset 0 0 1px 2px rgba(250,215,215,.7)"></div>

<svg class="a" style="left:80.0px;top:87.8px" width="51.5" height="51.5" viewBox="-25.75 -25.75 51.5 51.5">
<defs><radialGradient id="g1" cx="42%" cy="35%" r="68%"><stop offset="0" stop-color="#ffb08a"/><stop offset="0.35" stop-color="#f7743f"/><stop offset="0.8" stop-color="#e8461b"/><stop offset="1" stop-color="#c9300f"/></radialGradient></defs>
<circle cx="0" cy="0" r="23.95" fill="none" stroke="rgba(255,225,215,.7)" stroke-width="1.5"/>
<circle cx="0" cy="0" r="22.75" fill="url(#g1)" stroke="#b52a0c" stroke-width="1"/>
<path d="M-1.8 -12.2 H4.6 V11.8 H-1.8 V-5.8 L-7.2 -3.6 V-8.6 Z" fill="#fff" stroke="#1a0a05" stroke-width="2" stroke-linejoin="round"/></svg>
<svg class="a" style="left:11.9px;top:208.4px" width="51.5" height="51.5" viewBox="-25.75 -25.75 51.5 51.5">
<defs><radialGradient id="g2" cx="42%" cy="35%" r="68%"><stop offset="0" stop-color="#ffb08a"/><stop offset="0.35" stop-color="#f7743f"/><stop offset="0.8" stop-color="#e8461b"/><stop offset="1" stop-color="#c9300f"/></radialGradient></defs>
<circle cx="0" cy="0" r="23.95" fill="none" stroke="rgba(255,225,215,.7)" stroke-width="1.5"/>
<circle cx="0" cy="0" r="22.75" fill="url(#g2)" stroke="#b52a0c" stroke-width="1"/>
<text x="-0.6" y="10.6" text-anchor="middle" font-family="Liberation Sans" font-weight="bold" font-size="31" fill="#fff" stroke="#1a0a05" stroke-width="2.2" stroke-linejoin="round" paint-order="stroke">2</text></svg>
</div>
</body></html>
